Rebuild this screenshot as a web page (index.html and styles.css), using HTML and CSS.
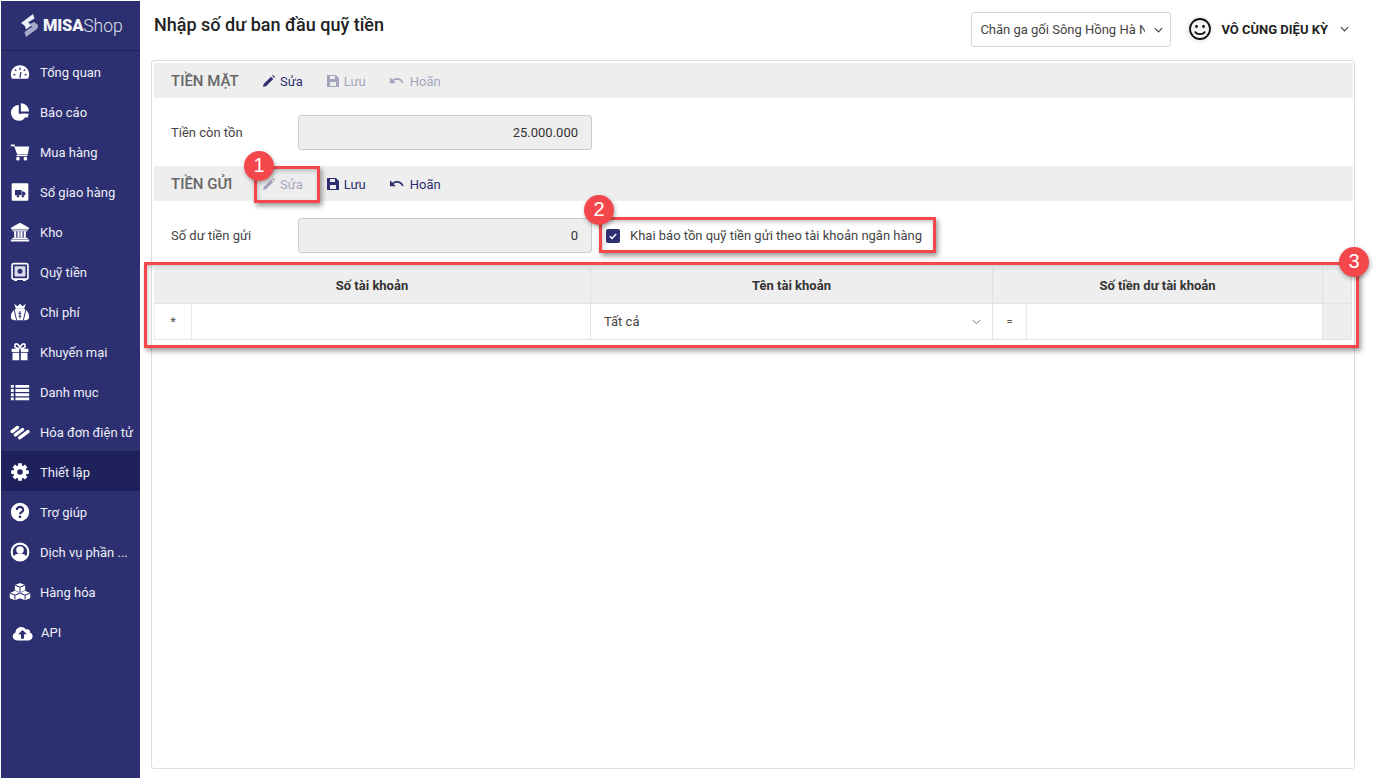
FILE: index.html
```html
<!DOCTYPE html>
<html lang="vi">
<head>
<meta charset="utf-8">
<title>Nhập số dư ban đầu quỹ tiền</title>
<link rel="stylesheet" href="styles.css">
</head>
<body>
<div class="app">
  <aside class="sidebar">
    <div class="logo">
      <svg class="logo-mark" viewBox="0 0 17 23"><path d="M12 0l1.500 4.500L7 8.500l4 2.500-6 4.500-1-3-.5-1L0 9z" fill="#eceef6"/><path d="M13 8l4 3-.5 3.500L5 23l-1.500-5 8-5.500L8 10.500z" fill="#a9acc9"/></svg>
      <span class="logo-bold">MISA</span><span class="logo-light">Shop</span>
    </div>
    <nav class="menu">
      <a class="item"><svg class="ico" viewBox="0 0 24 24"><path d="M12 4C5.900 4 1 8.900 1 15c0 2 .5 3.800 1.500 5h19c1-1.200 1.500-3 1.500-5C23 8.900 18.100 4 12 4z" fill="#fff"/><path d="M12 6.500v3M6 9l1.500 1.500M18 9l-1.500 1.500M4 15h2.500M20 15h-2.500M12 19l1-7" stroke="#2c3070" stroke-width="1.500" fill="none"/></svg><span>Tổng quan</span></a>
      <a class="item"><svg class="ico" viewBox="0 0 24 24"><path d="M10.500 3.500a9.500 9.500 0 1 0 9.500 10.500h-9.500z" fill="#fff"/><path d="M13 1.500v10h10A10 10 0 0 0 13 1.500zM13.500 14.200l7 5a9 9 0 0 0 2-5z" fill="#fff"/></svg><span>Báo cáo</span></a>
      <a class="item"><svg class="ico" viewBox="0 0 24 24"><path d="M1 3h4.500l.6 2.500H23l-1.500 9H8.500L5 5H1z" fill="#fff"/><path d="M8 15h13v2H8z" fill="#fff"/><circle cx="9.500" cy="20" r="2.200" fill="#fff"/><circle cx="18.500" cy="20" r="2.200" fill="#fff"/></svg><span>Mua hàng</span></a>
      <a class="item"><svg class="ico" viewBox="0 0 24 24"><rect x="2" y="1.500" width="20" height="21" rx="1.500" fill="#fff"/><path d="M6 9.500h8v6.500H6zM14.500 11.500h2.500l1.500 2v2.500h-4z" fill="#2c3070"/><circle cx="9.500" cy="17" r="1.400" fill="#2c3070"/><circle cx="15.500" cy="17" r="1.400" fill="#2c3070"/></svg><span>Sổ giao hàng</span></a>
      <a class="item"><svg class="ico" viewBox="0 0 24 24"><path d="M12 1 1.500 6.500V9h21V6.500zM3 10h18v1H3zM3 19h18v1.500H3zM1 21h22v2.500H1z" fill="#fff"/><path d="M5 11h2.500v8H5zM9 11h2.500v8H9zM12.500 11H15v8h-2.500zM16.500 11H19v8h-2.500z" fill="#fff"/></svg><span>Kho</span></a>
      <a class="item"><svg class="ico" viewBox="0 0 24 24"><rect x="2.500" y="2" width="19" height="18.500" rx="2" fill="none" stroke="#fff" stroke-width="2"/><rect x="5.500" y="5" width="13" height="12.500" rx="1" fill="#d9dbe9"/><circle cx="12" cy="11.200" r="3" fill="#2c3070"/><path d="M5 22h3.500M15.500 22H19" stroke="#fff" stroke-width="1.500"/></svg><span>Quỹ tiền</span></a>
      <a class="item"><svg class="ico" viewBox="0 0 24 24"><path d="M5 2l4 3 3-3 3 3 4-3-2 6H7z" fill="#fff"/><path d="M7 8h10c4 2 6 6 6 10 0 2-1 3-3 3.500-1.500.5-3 .5-8 .5s-6.500 0-8-.5C2 21 1 20 1 18c0-4 2-8 6-10z" fill="#fff"/><path d="M12 11v9M10 13.500h3.500M10 17h3.500M4.500 7l3.500 15M19.500 7 16 22" stroke="#2c3070" stroke-width="1.200" fill="none"/></svg><span>Chi phí</span></a>
      <a class="item"><svg class="ico" viewBox="0 0 24 24"><path d="M2 8h9v4H2zM13 8h9v4h-9zM3 13h8v9H3zM13 13h8v9h-8z" fill="#fff"/><path d="M11.500 8C8 8 5 6.500 6 3.500S11 3 12 7c1-4 5-6.500 6-3.500S16 8 12.500 8" fill="none" stroke="#fff" stroke-width="2"/></svg><span>Khuyến mại</span></a>
      <a class="item"><svg class="ico" viewBox="0 0 24 24"><path d="M1 3.500h3.500v3.500H1zM6.500 3.500H23v3.500H6.500zM1 8.500h3.500V12H1zM6.500 8.500H23V12H6.500zM1 13.500h3.500V17H1zM6.500 13.500H23V17H6.500zM1 18.500h3.500V22H1zM6.500 18.500H23V22H6.500z" fill="#fff"/></svg><span>Danh mục</span></a>
      <a class="item"><svg class="ico" viewBox="0 0 24 24"><path d="M2.500 11.500 9 6.500M6.500 15.500 15 9M11.500 19l10-7.500" stroke="#fff" stroke-width="4" stroke-linecap="round" fill="none"/></svg><span>Hóa đơn điện tử</span></a>
      <a class="item active"><svg class="ico" viewBox="0 0 24 24"><path d="M12 1.500v21M1.500 12h21M4.600 4.600l14.800 14.800M19.400 4.600 4.600 19.400" stroke="#fff" stroke-width="4.500"/><circle cx="12" cy="12" r="8" fill="#fff"/><circle cx="12" cy="12" r="3.300" fill="#1e215c"/></svg><span>Thiết lập</span></a>
      <a class="item"><svg class="ico" viewBox="0 0 24 24"><circle cx="12" cy="12" r="11" fill="#fff"/><path d="M8.200 9.500c0-5 7.600-5 7.600 0 0 2.700-3.800 2.700-3.800 5.300" fill="none" stroke="#2c3070" stroke-width="2.600"/><path d="M10.600 16.400h2.800v2.800h-2.800z" fill="#2c3070"/></svg><span>Trợ giúp</span></a>
      <a class="item"><svg class="ico" viewBox="0 0 24 24"><circle cx="12" cy="12" r="10" fill="none" stroke="#fff" stroke-width="2.600"/><circle cx="12" cy="9.500" r="4.500" fill="#fff"/><path d="M4.500 18c1-4 4.500-4 7.500-4s6.500 0 7.500 4l-3.500 3.500H8z" fill="#fff"/></svg><span>Dịch vụ phần ...</span></a>
      <a class="item"><svg class="ico ico-cubes" viewBox="0 0 28 24"><path d="M14 .5l6.500 2.700v6.600L14 12.500 7.500 9.800V3.200zM7.500 10.500l6.500 2.700v6.600l-6.500 2.700L1 19.800v-6.600zM20.500 10.500l6.500 2.700v6.600l-6.500 2.700-6.500-2.700v-6.600z" fill="#fff"/><path d="M8 3.500l6 2.500 6-2.500M14 6v6M1.500 13.500 7.500 16l6-2.500M7.500 16v6M14.500 13.500l6 2.500 6-2.500M20.500 16v6" fill="none" stroke="#2c3070" stroke-width="1.300"/></svg><span>Hàng hóa</span></a>
      <a class="item item-api"><svg class="ico ico-cloud" viewBox="0 0 24 24"><path d="M6 21c-6 0-7-7-2-9 0-6 8-9 12-3.500 3-1 5 1 4.500 3.500 5 2 3.500 9-1.500 9z" fill="#fff"/><path d="M12 9l-5 5h3.300v5h3.400v-5H17z" fill="#2c3070"/></svg><span>API</span></a>
    </nav>
  </aside>

  <main class="main">
    <header class="topbar">
      <h1 class="title">Nhập số dư ban đầu quỹ tiền</h1>
      <div class="branch"><span class="branch-text">Chăn ga gối Sông Hồng Hà Nội</span><svg class="chev" viewBox="0 0 10 6"><path d="M1 1l4 4 4-4" fill="none" stroke="#444" stroke-width="1.300"/></svg></div>
      <div class="user">
        <div class="avatar"><svg viewBox="0 0 24 24"><circle cx="12" cy="12" r="10" fill="none" stroke="#111" stroke-width="1.800"/><circle cx="8.500" cy="9.500" r="1.400" fill="#111"/><circle cx="15.500" cy="9.500" r="1.400" fill="#111"/><path d="M7 14.500c1.500 3.500 8.500 3.500 10 0" fill="none" stroke="#111" stroke-width="1.800"/></svg></div>
        <span class="user-name">VÔ CÙNG DIỆU KỲ</span>
        <svg class="chev" viewBox="0 0 10 6"><path d="M1 1l4 4 4-4" fill="none" stroke="#444" stroke-width="1.300"/></svg>
      </div>
    </header>

    <section class="panel">
      <div class="section">
        <span class="section-title">TIỀN MẶT</span>
        <span class="act"><svg viewBox="0 0 12 12"><path d="M0 12l.7-3L8 1.700 10.300 4 3 11.300zM9 .8 10 0l2 2-.8 1z" fill="#2c3070"/></svg>Sửa</span>
        <span class="act off"><svg viewBox="0 0 12 12"><path d="M0 0h9l3 3v9H0zM3 1v3h5V1zM3 7v4h6V7z" fill="#2c3070"/></svg>Lưu</span>
        <span class="act off act-undo"><svg viewBox="2 7 21 11"><path d="M12.500 8c-2.650 0-5.050.99-6.900 2.600L2 7v9h9l-3.620-3.620c1.390-1.160 3.160-1.880 5.120-1.880 3.540 0 6.550 2.310 7.600 5.500l2.370-.78C21.080 11.030 17.150 8 12.500 8z" fill="#2c3070"/></svg>Hoãn</span>
      </div>
      <div class="field">
        <label class="field-label">Tiền còn tồn</label>
        <div class="input">25.000.000</div>
      </div>
      <div class="section">
        <span class="section-title">TIỀN GỬI</span>
        <span class="act off"><svg viewBox="0 0 12 12"><path d="M0 12l.7-3L8 1.700 10.300 4 3 11.300zM9 .8 10 0l2 2-.8 1z" fill="#2c3070"/></svg>Sửa</span>
        <span class="act"><svg viewBox="0 0 12 12"><path d="M0 0h9l3 3v9H0zM3 1v3h5V1zM3 7v4h6V7z" fill="#2c3070"/></svg>Lưu</span>
        <span class="act act-undo"><svg viewBox="2 7 21 11"><path d="M12.500 8c-2.650 0-5.050.99-6.900 2.600L2 7v9h9l-3.620-3.620c1.390-1.160 3.160-1.880 5.120-1.880 3.540 0 6.550 2.310 7.600 5.500l2.370-.78C21.080 11.030 17.150 8 12.500 8z" fill="#2c3070"/></svg>Hoãn</span>
      </div>
      <div class="field field-gui">
        <label class="field-label">Số dư tiền gửi</label>
        <div class="input">0</div>
        <span class="check"><svg viewBox="0 0 14 14"><rect width="14" height="14" rx="2" fill="#2c3070"/><path d="M3.800 7.200l2.200 2.200 4.200-4.400" fill="none" stroke="#fff" stroke-width="1.500"/></svg></span>
        <span class="check-label">Khai báo tồn quỹ tiền gửi theo tài khoản ngân hàng</span>
      </div>
      <div class="grid">
        <div class="th">Số tài khoản</div>
        <div class="th">Tên tài khoản</div>
        <div class="th">Số tiền dư tài khoản</div>
        <div class="th th-end"></div>
        <div class="td td-split"><span class="mark">*</span><span class="cell"></span></div>
        <div class="td td-select"><span>Tất cả</span><svg class="chev" viewBox="0 0 10 6"><path d="M1 1l4 4 4-4" fill="none" stroke="#666" stroke-width="1"/></svg></div>
        <div class="td td-split td-sum"><span class="mark">=</span><span class="cell"></span></div>
        <div class="td td-end"></div>
      </div>
    </section>
  </main>
</div>

<div class="note note-1"></div>
<div class="note note-2"></div>
<div class="note note-3"></div>
<div class="badge badge-1">1</div>
<div class="badge badge-2">2</div>
<div class="badge badge-3">3</div>
</body>
</html>
```

FILE: styles.css
```css
* { box-sizing: border-box; }
html, body { margin: 0; height: 100%; }
body {
  position: relative;
  width: 1377px;
  height: 778px;
  overflow: hidden;
  background: #fff;
  font-family: Roboto, "Liberation Sans", sans-serif;
  font-size: 13px;
  color: #333;
}
.app {
  display: flex;
  height: 777px;
  margin-top: 1px;
  padding-left: 1px;
}
.sidebar {
  flex: 0 0 139px;
  background: #2c3070;
  color: #eeeef8;
}
.logo {
  display: flex;
  align-items: center;
  height: 50px;
  padding-left: 20px;
  border-bottom: 1px solid #1c1f5c;
}
.logo-mark { width: 17px; height: 23px; margin-right: 5px; }
.logo-bold { font-size: 16.500px; font-weight: 900; color: #f4f4fa; letter-spacing: -.2px; }
.logo-light { font-size: 17.500px; font-weight: 300; color: #dfe0ee; }
.menu { display: flex; flex-direction: column; }
.item {
  display: flex;
  align-items: center;
  height: 40px;
  padding: 2px 0 0 9px;
  gap: 10px;
  white-space: nowrap;
  font-size: 13px;
}
.item.active { background: #1e215c; }
.item-api { margin-top: 0; }
.ico { flex: 0 0 20px; width: 20px; height: 20px; }
.ico-cubes { flex: 0 0 22px; width: 22px; height: 20px; margin: 0 -1px; }
.ico-cloud { flex: 0 0 21px; width: 21px; height: 21px; margin: 0 -2px 0 2px; }

.main { flex: 1; display: flex; flex-direction: column; min-width: 0; }
.topbar {
  display: flex;
  align-items: center;
  height: 59px;
  padding: 0 28px 0 14px;
}
.title {
  margin: 0 auto 0 0;
  padding-bottom: 13px;
  font-size: 18px;
  font-weight: 500;
  color: #222;
}
.branch {
  display: flex;
  align-items: center;
  width: 200px;
  height: 35px;
  margin-top: -2px;
  padding: 0 8px;
  border: 1px solid #d6d6d6;
  border-radius: 3px;
}
.branch-text {
  flex: 0 0 165px;
  margin-right: 9px;
  overflow: hidden;
  white-space: nowrap;
  color: #444;
}
.chev { width: 9px; height: 6px; flex: none; }
.user { display: flex; align-items: center; margin-left: 15px; margin-top: -3px; }
.avatar {
  width: 27px;
  height: 27px;
  display: flex;
  align-items: center;
  justify-content: center;
  background: #f4f4f4;
  border-radius: 50%;
}
.avatar svg { width: 24px; height: 24px; }
.user-name { margin: 0 12px 0 8px; font-size: 13px; font-weight: 700; color: #222; }

.panel {
  flex: 1;
  margin: 0 22px 9px 11px;
  padding: 2px 1px 0 2px;
  border: 1px solid #dcdcdc;
  border-radius: 3px;
}
.section {
  display: flex;
  align-items: center;
  height: 35px;
  padding-left: 17px;
  background: #eee;
}
.section-title {
  width: 92px;
  font-size: 15px;
  font-weight: 500;
  color: #666;
}
.act {
  display: inline-flex;
  align-items: center;
  gap: 5px;
  margin-right: 24px;
  padding-top: 1px;
  color: #2c3070;
  font-weight: 400;
  font-size: 13px;
}
.act svg { width: 12px; height: 12px; }
.act-undo { gap: 6px; }
.act-undo svg { width: 14px; height: 8px; }
.act.off { opacity: .38; }
.field {
  display: flex;
  align-items: center;
  height: 68px;
  padding-left: 17px;
}
.field-gui { height: 67px; padding-top: 2px; }
.field-label { width: 127px; color: #444; }
.input {
  width: 294px;
  height: 35px;
  padding: 0 13px;
  line-height: 33px;
  text-align: right;
  background: #eee;
  border: 1px solid #ccc;
  border-radius: 3px;
  color: #333;
}
.check { width: 14px; height: 14px; margin-left: 14px; display: flex; }
.check svg { width: 14px; height: 14px; }
.check-label { margin-left: 10px; color: #444; }

.grid {
  display: grid;
  grid-template-columns: 437px 402px 330px 29px;
  grid-template-rows: 36px 36px;
  width: 1198px;
}
.th {
  display: flex;
  align-items: center;
  justify-content: center;
  background: #eee;
  border-right: 1px solid #e0e0e0;
  border-bottom: 1px solid #e4e4e4;
  font-size: 13px;
  font-weight: 700;
  color: #333;
}
.td {
  display: flex;
  align-items: center;
  background: #fff;
  border-right: 1px solid #e4e4e4;
  border-bottom: 1px solid #e4e4e4;
  border-left: 1px solid #ececec;
}
.td-split .mark {
  flex: 0 0 37px;
  align-self: stretch;
  display: flex;
  align-items: center;
  justify-content: center;
  border-right: 1px solid #e8e8e8;
  color: #555;
}
.td-sum .mark { flex-basis: 34px; font-size: 11px; }
.td-select { justify-content: space-between; padding: 0 11px 0 13px; color: #444; border-left: 0; }
.td-sum { border-left: 0; }
.td-end, .th-end { background: #eee; border-left: 0; }

.note {
  position: absolute;
  border: 3px solid #f4474b;
  box-shadow: 2px 3px 5px rgba(0, 0, 0, .4), inset 1px 2px 4px rgba(0, 0, 0, .22);
}
.note-1 { left: 254px; top: 166px; width: 66px; height: 37px; }
.note-2 { left: 599px; top: 217px; width: 337px; height: 36px; }
.note-3 { left: 144px; top: 262px; width: 1215px; height: 86px; }
.badge {
  position: absolute;
  width: 30px;
  height: 30px;
  line-height: 29px;
  text-align: center;
  border-radius: 50%;
  background: #f4474b;
  color: #fff;
  font-family: "Liberation Sans", sans-serif;
  font-size: 20px;
  box-shadow: 1px 2px 4px rgba(0, 0, 0, .35);
}
.badge-1 { left: 244px; top: 151px; }
.badge-2 { left: 584px; top: 195px; }
.badge-3 { left: 1339px; top: 247px; }
```
